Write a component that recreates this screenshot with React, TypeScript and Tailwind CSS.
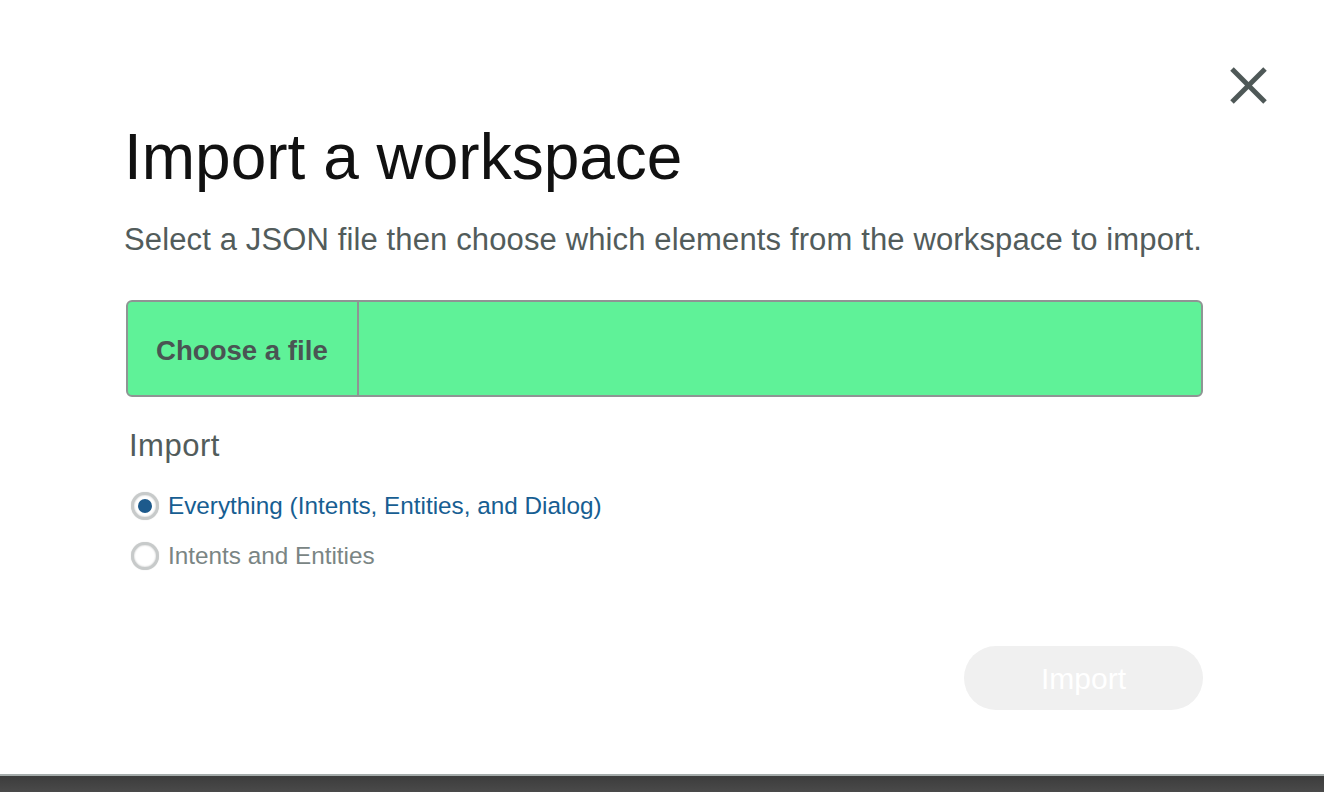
import React, { useState } from 'react';

const font = { fontFamily: '"Liberation Sans", Arial, sans-serif' };

const Radio: React.FC<{ checked: boolean }> = ({ checked }) => (
  <span className="flex h-[28px] w-[28px] shrink-0 items-center justify-center rounded-full border-[3px] border-[#c7caca] bg-white shadow-[inset_0_0_2px_rgba(0,0,0,0.25),0_0_1px_rgba(0,0,0,0.2)]">
    {checked && <span className="h-[14px] w-[14px] rounded-full bg-[#1d5a8c]" />}
  </span>
);

export default function App() {
  const [choice, setChoice] = useState<'all' | 'ie'>('all');

  return (
    <div className="relative flex h-[792px] flex-col bg-white" style={font}>
      {/* Close */}
      <button className="absolute right-[56px] top-[66px] h-[39px] w-[39px]" aria-label="Close">
        <svg viewBox="0 0 39 39" width="39" height="39">
          <line x1="3" y1="3" x2="36" y2="36" stroke="#4e5857" strokeWidth="5" />
          <line x1="36" y1="3" x2="3" y2="36" stroke="#4e5857" strokeWidth="5" />
        </svg>
      </button>

      <div className="flex-1 pl-[120px] pr-[121px] pt-[125px]">
        <h1 className="ml-[4px] text-[64px] leading-[64px] text-[#111]">Import a workspace</h1>
        <p className="ml-[4px] mt-[33px] text-[31px] leading-[36px] tracking-[0.13px] text-[#525c5b]">
          Select a JSON file then choose which elements from the workspace to import.
        </p>

        {/* File chooser */}
        <div className="ml-[6px] mt-[42px] flex h-[97px] rounded-[6px] border-2 border-[#8f9594] bg-[#5ff298]">
          <div className="flex w-[231px] items-center border-r-2 border-[#8f9594] pl-[28px] pt-[5px] text-[27.6px] font-bold text-[#4a5453]">
            Choose a file
          </div>
          <div className="flex-1" />
        </div>

        <div className="ml-[9px] mt-[31px] text-[31px] leading-[36px] tracking-[0.5px] text-[#525c5b]">Import</div>

        <div className="ml-[11px] mt-[17px] flex flex-col">
          <label className="flex h-[50px] cursor-pointer items-center gap-[9px]" onClick={() => setChoice('all')}>
            <Radio checked={choice === 'all'} />
            <span className={`text-[24.3px] ${choice === 'all' ? 'text-[#175e92]' : 'text-[#7a8584]'}`}>
              Everything (Intents, Entities, and Dialog)
            </span>
          </label>
          <label className="flex h-[50px] cursor-pointer items-center gap-[9px]" onClick={() => setChoice('ie')}>
            <Radio checked={choice === 'ie'} />
            <span className={`text-[24.3px] ${choice === 'ie' ? 'text-[#175e92]' : 'text-[#7a8584]'}`}>
              Intents and Entities
            </span>
          </label>
        </div>

        <div className="mt-[65px] flex justify-end">
          <button
            disabled
            className="h-[64px] w-[239px] rounded-full bg-[#f0f0f0] text-[30px] text-white"
          >
            Import
          </button>
        </div>
      </div>

      {/* Bottom bar */}
      <div className="h-[18px] border-t-2 border-[#a5acab] bg-gradient-to-b from-[#3c3c3c] to-[#4a4a4a]" />
    </div>
  );
}
